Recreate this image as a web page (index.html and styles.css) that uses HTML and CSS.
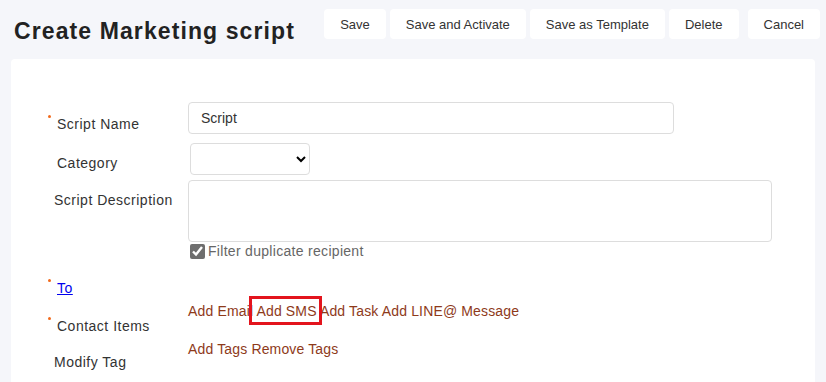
FILE: index.html
```html
<!DOCTYPE html>
<html lang="en">
<head>
    <meta charset="UTF-8">
    <meta name="viewport" content="width=device-width, initial-scale=1.0">
    <title>Create Marketing script</title>
    <link rel="stylesheet" href="styles.css">
</head>
<body>
    <div class="header">
        <h1 class="page-title">Create Marketing script</h1>
        <div class="toolbar">
            <button class="button">Save</button>
            <button class="button">Save and Activate</button>
            <button class="button">Save as Template</button>
            <button class="button">Delete</button>
            <button class="button cancel">Cancel</button>
        </div>
    </div>

    <div class="card">
        <!-- Script Name -->
        <div class="form-row row-name">
            <label class="form-label required">Script Name</label>
            <input class="text-input" type="text" value="Script">
        </div>

        <!-- Category -->
        <div class="form-row row-category">
            <label class="form-label label-category">Category</label>
            <select class="select-input">
                <option></option>
            </select>
        </div>

        <!-- Description -->
        <div class="form-row row-desc">
            <label class="form-label label-desc">Script Description</label>
            <textarea class="text-area"></textarea>
        </div>

        <div class="form-row row-check">
            <div class="form-label"></div>
            <label class="check">
                <input type="checkbox" checked>
                <span>Filter duplicate recipient</span>
            </label>
        </div>

        <!-- Recipients -->
        <div class="form-row row-to">
            <div class="form-label required"><a href="#" class="to-link">To</a></div>
        </div>

        <div class="form-row row-contact">
            <label class="form-label required">Contact Items</label>
            <div class="actions">
                <a href="#" class="action">Add Email</a>
                <a href="#" class="action highlight">Add SMS</a>
                <a href="#" class="action">Add Task</a>
                <a href="#" class="action">Add LINE@ Message</a>
            </div>
        </div>

        <div class="form-row row-tag">
            <label class="form-label label-tag">Modify Tag</label>
            <div class="actions">
                <a href="#" class="action">Add Tags</a>
                <a href="#" class="action">Remove Tags</a>
            </div>
        </div>
    </div>
</body>
</html>
```

FILE: styles.css
```css
:root {
    --page-bg: #f5f6fa;
    --text-color: #333333;
    --border-color: #dddddd;
    --link-color: #8e3a1a;
    --required-color: #f26a1b;
    --mark-color: #e3141d;
}

body {
    font-family: 'Liberation Sans', Arial, sans-serif;
    background-color: var(--page-bg);
    color: var(--text-color);
    margin: 0;
    padding: 0;
}

.header {
    display: flex;
    justify-content: space-between;
    align-items: flex-start;
    padding: 9px 6px 0 14px;
}

.page-title {
    margin: 9px 0 0;
    font-size: 23px;
    line-height: 26px;
    letter-spacing: 1.1px;
    font-weight: bold;
    color: #222222;
}

.toolbar {
    display: flex;
    gap: 4px;
}

.button {
    font-family: inherit;
    font-size: 13px;
    color: var(--text-color);
    background-color: #ffffff;
    border: none;
    border-radius: 4px;
    height: 30px;
    padding: 0 16px;
    cursor: pointer;
}

.button.cancel {
    margin-left: 5px;
}

.card {
    background-color: #ffffff;
    border-radius: 4px;
    margin: 15px 11px 0;
    padding: 43px 0 40px 37px;
}

.form-row {
    display: flex;
    align-items: flex-start;
}

.form-label {
    flex: none;
    width: 140px;
    box-sizing: border-box;
    padding-left: 8px;
    font-size: 14px;
    line-height: 18px;
    letter-spacing: 0.5px;
}

.form-label.required {
    padding-left: 0;
}

.form-label.required::before {
    content: "";
    display: inline-block;
    width: 3px;
    height: 3px;
    border-radius: 50%;
    background-color: var(--required-color);
    vertical-align: top;
    margin: 0 6px 0 0;
}

.row-name .form-label {
    padding-top: 13px;
}

.row-category {
    margin-top: 9px;
}

.row-category .form-label {
    padding-top: 11px;
    padding-left: 9px;
}

.row-desc {
    margin-top: 5px;
}

.row-desc .form-label {
    padding-top: 11px;
    padding-left: 6px;
}

.row-check {
    margin-top: 0;
}

.row-to {
    margin-top: 19px;
}

.row-contact {
    margin-top: 5px;
}

.row-contact .form-label {
    padding-top: 15px;
}

.row-tag {
    margin-top: 5px;
}

.row-tag .form-label {
    padding-top: 13px;
    padding-left: 6px;
}

.text-input {
    width: 486px;
    height: 32px;
    box-sizing: border-box;
    border: 1px solid var(--border-color);
    border-radius: 4px;
    padding: 0 12px;
    font-family: inherit;
    font-size: 14px;
    color: var(--text-color);
}

.select-input {
    width: 120px;
    height: 32px;
    margin-left: 2px;
    border: 1px solid var(--border-color);
    border-radius: 4px;
    background-color: #ffffff;
    font-family: inherit;
    font-size: 14px;
}

.text-area {
    width: 584px;
    height: 62px;
    box-sizing: border-box;
    border: 1px solid var(--border-color);
    border-radius: 4px;
    resize: none;
    margin: 0;
    font-family: inherit;
}

.check {
    display: flex;
    align-items: center;
    gap: 3px;
    margin-left: 2px;
    font-size: 14px;
    line-height: 18px;
    color: #666666;
    letter-spacing: 0.3px;
}

.check input {
    width: 15px;
    height: 15px;
    margin: 0;
    accent-color: #6e6e6e;
}

.to-link {
    color: #0000ee;
    text-decoration: underline;
}

.actions {
    font-size: 14px;
    line-height: 18px;
    letter-spacing: 0.15px;
}

.action {
    color: var(--link-color);
    text-decoration: none;
}

.action.highlight {
    position: relative;
}

/* annotation frame drawn over the link */
.action.highlight::after {
    content: "";
    position: absolute;
    left: -7px;
    right: -5px;
    top: -7px;
    bottom: -6px;
    border: 3px solid var(--mark-color);
}
```
